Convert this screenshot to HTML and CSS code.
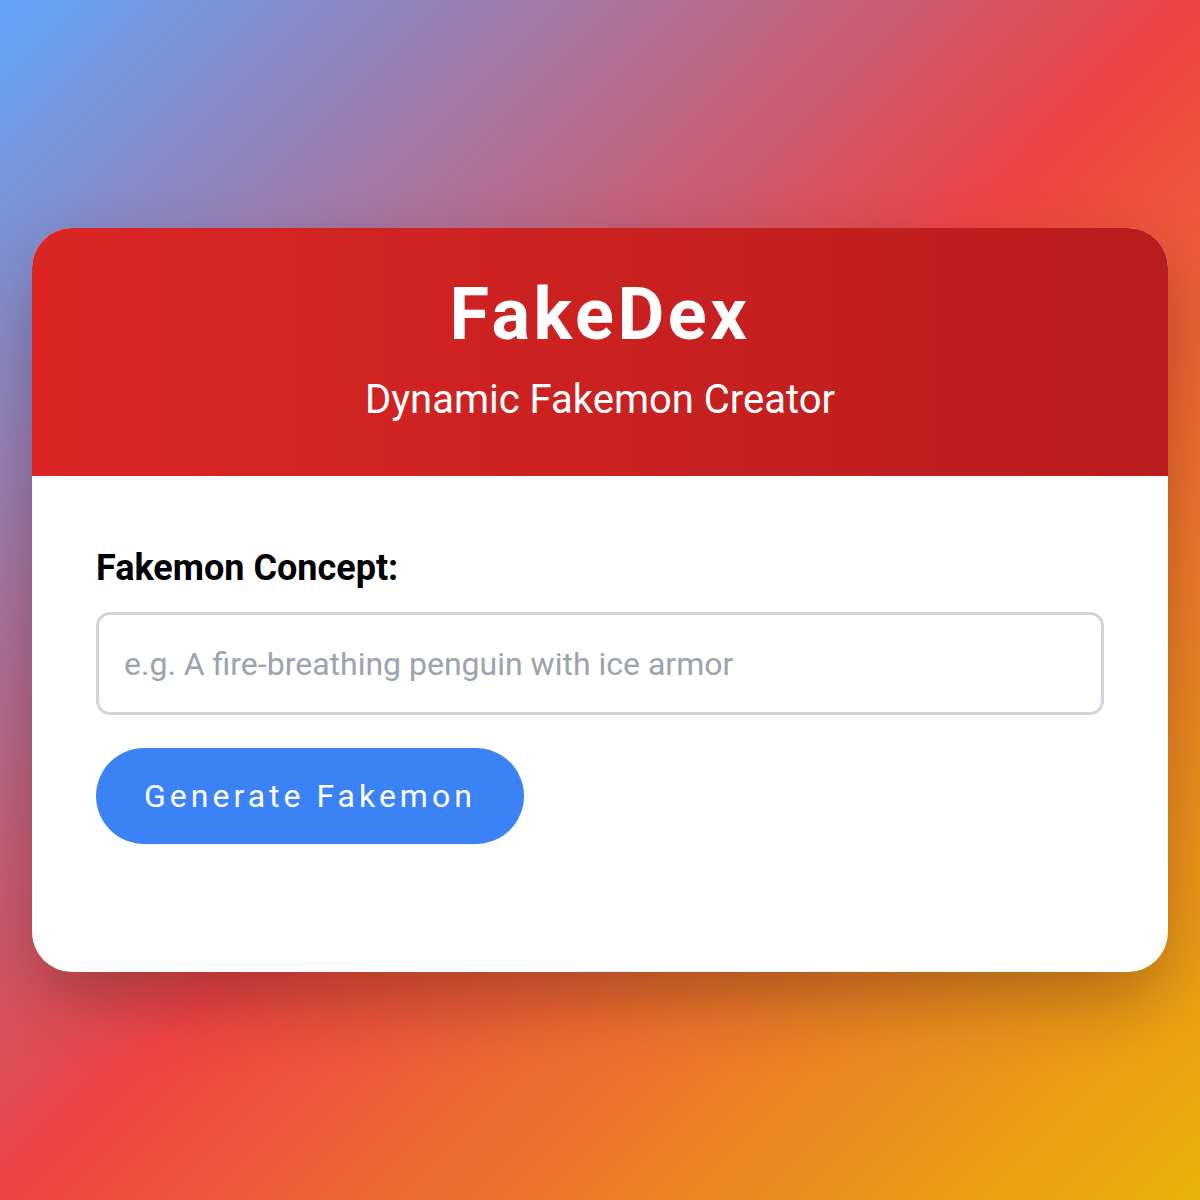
FILE: index.html
```html
<!DOCTYPE html>
<html lang="en">
<head>
  <meta charset="UTF-8" />
  <title>FakeDex</title>
  <meta name="viewport" content="width=device-width, initial-scale=1.0" />
  <link rel="stylesheet" href="styles.css">
</head>
<body>
  <div class="card">
    <header class="card-header">
      <h1>FakeDex</h1>
      <p class="subtitle">Dynamic Fakemon Creator</p>
    </header>

    <div class="card-body">
      <label for="concept">Fakemon Concept:</label>
      <input type="text" id="concept" placeholder="e.g. A fire-breathing penguin with ice armor">
      <button class="generate">Generate Fakemon</button>
    </div>
  </div>
</body>
</html>
```

FILE: styles.css
```css
* {
  box-sizing: border-box;
}

html, body {
  height: 100%;
}

body {
  margin: 0;
  font-family: Roboto, "Liberation Sans", sans-serif;
  background: linear-gradient(135deg, #60a5fa 0%, #ef4444 50%, #eab308 100%);
  display: flex;
  align-items: center;
  justify-content: center;
  padding: 0 32px;
}

.card {
  width: 100%;
  background: #fff;
  border-radius: 40px;
  overflow: hidden;
  box-shadow: 0 30px 70px -6px rgba(0, 0, 0, 0.28);
}

.card-header {
  background: linear-gradient(90deg, #dc2626, #b91c1c);
  color: #fff;
  text-align: center;
  padding: 44px 32px 46px;
}

.card-header h1 {
  margin: 0;
  font-size: 72px;
  font-weight: 700;
  line-height: 1.2;
  letter-spacing: 3.6px;
}

.subtitle {
  margin: 12px 0 0;
  font-size: 40px;
  line-height: 1.5;
}

.card-body {
  padding: 68px 64px 128px;
}

label {
  display: block;
  font-size: 36px;
  font-weight: 700;
  line-height: 48px;
  color: #000;
  margin-bottom: 20px;
}

input[type="text"] {
  display: block;
  width: 100%;
  height: 103px;
  padding: 0 25px;
  font-family: inherit;
  font-size: 32px;
  border: 3px solid #d1d5db;
  border-radius: 14px;
  color: #111;
  outline: none;
}

input::placeholder {
  color: #9ca3af;
}

.generate {
  margin-top: 33px;
  padding: 24px 48px;
  font-family: inherit;
  font-size: 32px;
  line-height: 1.5;
  letter-spacing: 4px;
  color: #fff;
  background: #3b82f6;
  border: none;
  border-radius: 999px;
  cursor: pointer;
}
```
